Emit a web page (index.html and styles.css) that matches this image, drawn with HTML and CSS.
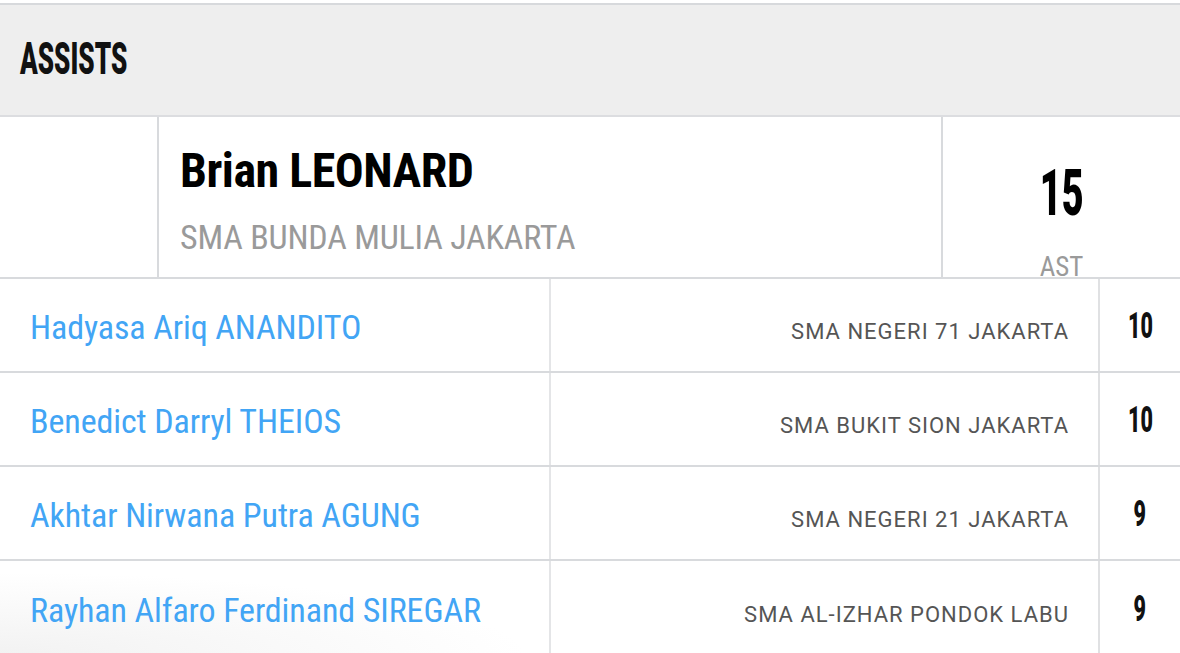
FILE: index.html
```html
<!DOCTYPE html>
<html lang="id">
<head>
<meta charset="utf-8">
<title>Assists</title>
<link rel="stylesheet" href="styles.css">
</head>
<body>
<div class="board">
  <div class="head">
    <h2 class="title"><span class="squeeze">ASSISTS</span></h2>
  </div>
  <div class="leader">
    <div class="photo"></div>
    <div class="info">
      <div class="lname"><span class="cond">Brian LEONARD</span></div>
      <div class="lschool"><span class="cond">SMA BUNDA MULIA JAKARTA</span></div>
    </div>
    <div class="stat">
      <div class="big"><span class="squeeze">15</span></div>
      <div class="unit"><span class="cond">AST</span></div>
    </div>
  </div>
  <div class="row">
    <div class="name"><span class="cond">Hadyasa Ariq ANANDITO</span></div>
    <div class="school"><span class="plain">SMA NEGERI 71 JAKARTA</span></div>
    <div class="num"><span class="squeeze">10</span></div>
  </div>
  <div class="row">
    <div class="name"><span class="cond">Benedict Darryl THEIOS</span></div>
    <div class="school"><span class="plain">SMA BUKIT SION JAKARTA</span></div>
    <div class="num"><span class="squeeze">10</span></div>
  </div>
  <div class="row">
    <div class="name"><span class="cond">Akhtar Nirwana Putra AGUNG</span></div>
    <div class="school"><span class="plain">SMA NEGERI 21 JAKARTA</span></div>
    <div class="num"><span class="squeeze">9</span></div>
  </div>
  <div class="row last">
    <div class="name"><span class="cond">Rayhan Alfaro Ferdinand SIREGAR</span></div>
    <div class="school"><span class="plain">SMA AL-IZHAR PONDOK LABU</span></div>
    <div class="num"><span class="squeeze">9</span></div>
  </div>
</div>
</body>
</html>
```
FILE: styles.css
```css
* { box-sizing: border-box; }
html, body { margin: 0; padding: 0; background: #fff; }
body {
  font-family: Roboto, "Liberation Sans", sans-serif;
  overflow: hidden;
  padding-top: 3px;
}
.board {
  width: 1180px;
  border-top: 2px solid #d7d9dc;
}
.cond {
  display: inline-block;
  white-space: nowrap;
  font-stretch: condensed;
}
.plain {
  display: inline-block;
  white-space: nowrap;
  letter-spacing: 1px;
}
.squeeze {
  display: inline-block;
  white-space: nowrap;
  font-weight: 900;
  transform: scaleX(0.58);
}
.head {
  height: 112px;
  background: #eeeeee;
  border-bottom: 2px solid #dcdde0;
  display: flex;
  align-items: center;
  padding-left: 20px;
}
.title {
  margin: 0;
  font-size: 45px;
  line-height: 1;
  color: #111;
  position: relative;
  top: -2px;
}
.title .squeeze { transform-origin: left center; }
.leader {
  display: flex;
  height: 162px;
  border-bottom: 2px solid #d8dadd;
}
.photo {
  width: 159px;
  border-right: 2px solid #d8dadd;
}
.info {
  flex: 1;
  border-right: 2px solid #d8dadd;
  padding-left: 21px;
  padding-top: 30px;
}
.lname {
  font-size: 48px;
  font-weight: 700;
  letter-spacing: -0.5px;
  line-height: 1;
  color: #000;
  height: 52px;
}
.lschool {
  font-size: 34px;
  letter-spacing: -0.2px;
  line-height: 1;
  color: #9a9a9a;
  margin-top: 21px;
}
.stat {
  width: 237px;
  display: flex;
  flex-direction: column;
  align-items: center;
  padding-top: 44px;
}
.big {
  font-size: 65px;
  line-height: 1;
  color: #000;
}
.unit {
  font-size: 27px;
  line-height: 1;
  color: #9a9a9a;
  margin-top: 28px;
}
.row {
  display: flex;
  height: 94px;
  border-bottom: 2px solid #d8dadd;
}
.name {
  width: 551px;
  border-right: 2px solid #e4e5e7;
  display: flex;
  align-items: center;
  padding-left: 30px;
  padding-top: 4px;
  font-size: 34px;
  letter-spacing: -0.1px;
  color: #42a5f5;
}
.school {
  flex: 1;
  border-right: 2px solid #e0e1e3;
  display: flex;
  align-items: center;
  justify-content: flex-end;
  padding-right: 29px;
  padding-top: 12px;
  font-size: 22px;
  color: #555;
}
.num {
  width: 80px;
  display: flex;
  align-items: center;
  justify-content: center;
  font-size: 37px;
  color: #111;
}
.row.last {
  border-bottom: none;
  background: radial-gradient(ellipse 700px 110px at 0 100%, #f2f2f2 0%, rgba(255,255,255,0) 75%);
}
```
